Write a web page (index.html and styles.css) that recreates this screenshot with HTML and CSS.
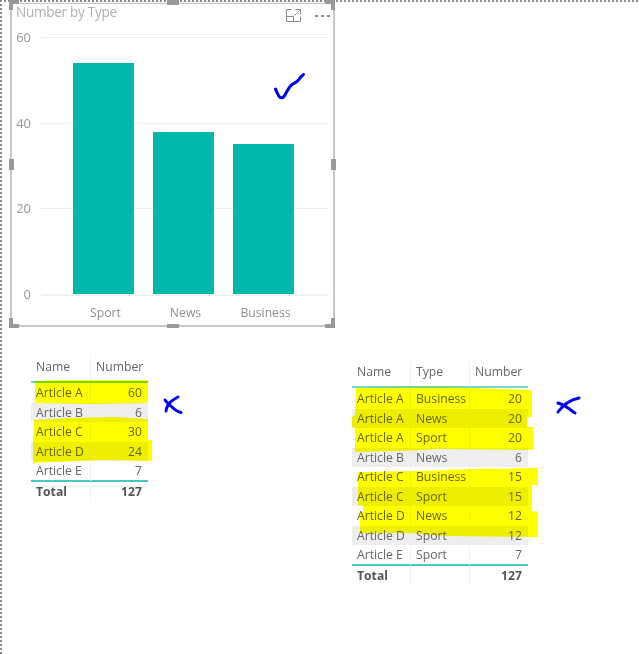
FILE: index.html
```html
<!DOCTYPE html>
<html lang="en">
<head>
<meta charset="utf-8">
<title>Number by Type</title>
<link rel="stylesheet" href="styles.css">
</head>
<body>
<main class="stage">
  <section class="chart">
    <header class="chart-head">
      <h2 class="chart-title">Number by Type</h2>
      <div class="chart-tools">
        <svg class="focus-icon" width="15" height="13" viewBox="0 0 15 13"><path d="M5.500 .5H.5V12.500H14.500V7.500M.5 7.500H7.500V12.500M9.500 .5H14.500V5.500M14.500 .5L8.500 6.500" fill="none" stroke="#8c8c8c"/></svg>
        <div class="more"><i></i><i></i><i></i></div>
      </div>
    </header>
    <div class="plot">
      <div class="grid-row"><span>60</span><b></b></div>
      <div class="grid-row"><span>40</span><b></b></div>
      <div class="grid-row"><span>20</span><b></b></div>
      <div class="grid-row base"><span>0</span><b></b></div>
      <div class="bars">
        <div class="bar" style="height:231px"></div>
        <div class="bar" style="height:162px"></div>
        <div class="bar" style="height:150px"></div>
      </div>
    </div>
    <div class="cats"><span>Sport</span><span>News</span><span>Business</span></div>
    <i class="h h-tl"></i><i class="h h-tr"></i><i class="h h-bl"></i><i class="h h-br"></i>
    <i class="m m-t"></i><i class="m m-b"></i><i class="m m-l"></i><i class="m m-r"></i>
  </section>

  <section class="tbl tbl-one">
    <div class="row head"><span>Name</span><span class="num">Number</span></div>
    <div class="row"><span>Article A</span><span class="num">60</span></div>
    <div class="row alt"><span>Article B</span><span class="num">6</span></div>
    <div class="row"><span>Article C</span><span class="num">30</span></div>
    <div class="row alt"><span>Article D</span><span class="num">24</span></div>
    <div class="row"><span>Article E</span><span class="num">7</span></div>
    <div class="row total"><span>Total</span><span class="num">127</span></div>
  </section>

  <section class="tbl tbl-two">
    <div class="row head"><span>Name</span><span>Type</span><span class="num">Number</span></div>
    <div class="row"><span>Article A</span><span>Business</span><span class="num">20</span></div>
    <div class="row alt"><span>Article A</span><span>News</span><span class="num">20</span></div>
    <div class="row"><span>Article A</span><span>Sport</span><span class="num">20</span></div>
    <div class="row alt"><span>Article B</span><span>News</span><span class="num">6</span></div>
    <div class="row"><span>Article C</span><span>Business</span><span class="num">15</span></div>
    <div class="row alt"><span>Article C</span><span>Sport</span><span class="num">15</span></div>
    <div class="row"><span>Article D</span><span>News</span><span class="num">12</span></div>
    <div class="row alt"><span>Article D</span><span>Sport</span><span class="num">12</span></div>
    <div class="row"><span>Article E</span><span>Sport</span><span class="num">7</span></div>
    <div class="row total"><span>Total</span><span></span><span class="num">127</span></div>
  </section>

  <svg class="marker" width="639" height="654" viewBox="0 0 639 654">
    <path d="M35 381L60 380L148 380V403L90 404L35 403Z"/>
    <path d="M34 420L70 418L115 417L148 419V440L152 440V461L100 460L33 463V441Z"/>
    <path d="M356 388L440 387L532 390V417L527 417V427L533 427V450L440 449L400 451L355 452V428L352 427V417L355 415Z"/>
    <path d="M358 472L420 471L470 469L538 468V485L532 485V511L538 512V537L450 536L410 533L360 533V513L363 512V506L358 505Z"/>
  </svg>
  <svg class="ink" width="639" height="654" viewBox="0 0 639 654">
    <path d="M275.500 89C277 92 278 96 280 97.500C282 98.500 284 97 285 95C287 91 289 87 292 84.500C295 82.500 297 82 298.500 80C300 77.500 301.500 76 303.500 74.500"/>
    <path d="M178 397C174 399 170 402 168 405C167 407 166 409 166 411"/>
    <path d="M165 400C167 403 170 405 172 407C175 410 178 412 181 412.500"/>
    <path d="M579 398C574 399 570 401 567 403C563 406 560 409 558 412"/>
    <path d="M558 403C562 404 565 406 568 408C571 410 573 412 575 413"/>
  </svg>
</main>
</body>
</html>
```

FILE: styles.css
```css
* { box-sizing: border-box; }
html, body { margin: 0; padding: 0; background: #fff; }
body { font-family: "Open Sans", "Noto Sans", sans-serif; }

.stage {
  position: relative;
  width: 639px;
  height: 654px;
  overflow: hidden;
  background-color: #fff;
  background-image:
    repeating-linear-gradient(90deg, #8a8a8a 0 2px, transparent 2px 4px),
    repeating-linear-gradient(180deg, #8a8a8a 0 2px, transparent 2px 4px);
  background-size: 100% 2px, 2px 100%;
  background-position: 0 0, 0 0;
  background-repeat: no-repeat;
}

/* chart visual */
.chart {
  position: absolute;
  left: 10px;
  top: 3px;
  width: 325px;
  height: 324px;
  border: 1px solid #c8c8c8;
  border-width: 1px 2px 2px 2px;
  background: #fff;
}
.chart-head {
  height: 24px;
  display: flex;
  justify-content: space-between;
  align-items: flex-start;
}
.chart-title {
  margin: 0;
  padding-left: 4px;
  font-size: 13.600px;
  letter-spacing: -.3px;
  line-height: 16px;
  font-weight: 400;
  color: #b0b0b0;
}
.chart-tools {
  display: flex;
  align-items: center;
  gap: 14px;
  padding: 5px 3px 0 0;
}
.more { display: flex; gap: 3px; }
.more i { width: 3px; height: 2px; background: #8c8c8c; }

.plot {
  position: relative;
  height: 267px;
  margin-top: 9px;
}
.grid-row {
  height: 85.600px;
  display: flex;
  align-items: flex-start;
  color: #999;
  font-size: 13px;
  line-height: 18px;
}
.grid-row.base { height: 10px; }
.grid-row span {
  width: 19px;
  text-align: right;
  transform: translateY(-9px);
}
.grid-row b {
  margin-left: 10px;
  width: 288px;
  height: 1px;
  background: #ededed;
}
.grid-row.base b { height: 2px; background: #f0f0f0; }
.bars {
  position: absolute;
  left: 61px;
  top: 26px;
  height: 231px;
  display: flex;
  align-items: flex-end;
  gap: 19px;
}
.bar { width: 61px; background: #01b8aa; }

.cats {
  display: flex;
  gap: 19px;
  padding-left: 63px;
  font-size: 12.200px;
  line-height: 18px;
  color: #8f8f8f;
}
.cats span { width: 61px; text-align: center; white-space: nowrap; }

.h { position: absolute; background: #999; }
.h::after { content: ""; position: absolute; background: #999; }
.h-tl { left: -3px; top: -4px; width: 10px; height: 4px; }
.h-tl::after { left: 0; top: 0; width: 4px; height: 10px; }
.h-tr { right: -2px; top: -4px; width: 10px; height: 4px; }
.h-tr::after { right: 0; top: 0; width: 4px; height: 10px; }
.h-bl { left: -3px; bottom: -3px; width: 10px; height: 4px; }
.h-bl::after { left: 0; bottom: 0; width: 4px; height: 10px; }
.h-br { right: -2px; bottom: -3px; width: 10px; height: 4px; }
.h-br::after { right: 0; bottom: 0; width: 4px; height: 10px; }
.m { position: absolute; background: #999; }
.m-t { left: 155px; top: -4px; width: 12px; height: 5px; }
.m-b { left: 155px; bottom: -3px; width: 12px; height: 4px; }
.m-l { left: -3px; top: 155px; width: 5px; height: 11px; }
.m-r { right: -3px; top: 155px; width: 5px; height: 11px; }

/* tables */
.tbl {
  position: absolute;
  font-size: 12.200px;
  color: #666;
}
.tbl .row { display: grid; align-items: stretch; white-space: nowrap; }
.tbl-one { left: 31px; top: 356px; width: 117px; }
.tbl-one .row { grid-template-columns: 60px 57px; }
.tbl-two { left: 352px; top: 361px; width: 176px; }
.tbl-two .row { grid-template-columns: 59px 59px 58px; }

.row { height: 19.600px; line-height: 19.600px; }
.row > span {
  padding: 0 6px 0 5px;
  border-right: 1px solid #eaf6f6;
  overflow: hidden;
}
.row > span:last-child { border-right: 0; }
.row .num { text-align: right; }
.row.alt { background: #eee; }
.row.alt > span { border-right-color: transparent; }
.row.head {
  height: 27px;
  line-height: 21px;
  border-bottom: 2px solid #76d7d1;
}
.tbl-two .row { height: 19.500px; line-height: 19.500px; }
.tbl-two .row.head { height: 27px; line-height: 21px; margin-bottom: 1px; }
.row.total,
.tbl-two .row.total {
  height: 20px;
  line-height: 19px;
  margin-top: -1px;
  border-top: 2px solid #45c9c0;
  font-weight: 700;
  color: #555;
}

/* hand-drawn annotations over the report */
.marker, .ink { position: absolute; left: 0; top: 0; pointer-events: none; }
.marker { mix-blend-mode: multiply; }
.marker path { fill: #ff0; }
.ink path {
  fill: none;
  stroke: #0000f0;
  stroke-width: 3px;
  stroke-linecap: round;
  stroke-linejoin: round;
}
```
